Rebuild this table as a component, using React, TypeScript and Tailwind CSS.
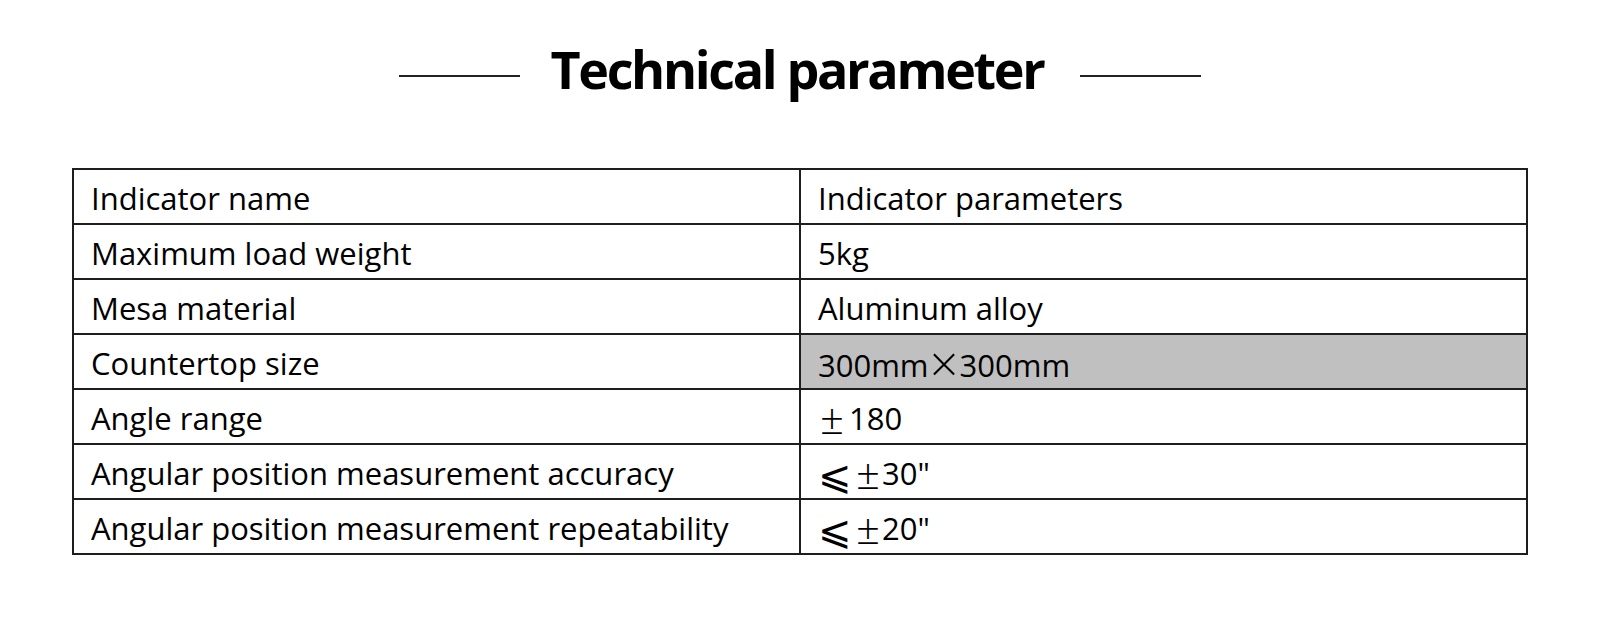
import React from "react";

// wide, thin symbols like the CJK ones in the original sheet
const Sym = ({ c, cls }: { c: string; cls: string }) => (
  <span className={`inline-block text-center leading-none ${cls}`}>{c}</span>
);

const Times = () => <Sym c={"\u00d7"} cls="w-[31px] text-[50px] font-extralight align-[-5px]" />;
const PlusMinus = () => <Sym c={"\u00b1"} cls="w-[28px] text-[42px] font-light align-[-4px]" />;
const Leq = () => <Sym c={"\u2a7d"} cls="w-[33px] text-[40px] font-extralight align-[-4px]" />;

const rows: { name: string; value: React.ReactNode; shaded?: boolean }[] = [
  { name: "Indicator name", value: "Indicator parameters" },
  { name: "Maximum load weight", value: "5kg" },
  { name: "Mesa material", value: "Aluminum alloy" },
  {
    name: "Countertop size",
    value: (
      <>
        300mm<Times />300mm
      </>
    ),
    shaded: true,
  },
  {
    name: "Angle range",
    value: (
      <>
        <PlusMinus />
        <span className="ml-[3px]">180</span>
      </>
    ),
  },
  {
    name: "Angular position measurement accuracy",
    value: (
      <>
        <Leq />
        <span className="ml-[3px]" />
        <PlusMinus />30"
      </>
    ),
  },
  {
    name: "Angular position measurement repeatability",
    value: (
      <>
        <Leq />
        <span className="ml-[3px]" />
        <PlusMinus />20"
      </>
    ),
  },
];

const App = () => {
  return (
    <div className="min-h-[635px] w-[1600px] bg-white font-['Open_Sans','Noto_Sans_CJK_SC','DejaVu_Sans',sans-serif] text-black">
      {/* Title */}
      <div className="flex items-start justify-center pt-[39px]">
        <div className="mt-[36px] h-[2px] w-[121px] bg-[#222]" />
        <h1 className="ml-[31px] mr-[37px] text-[52px] font-bold leading-[60px] tracking-[-0.045em]">
          Technical parameter
        </h1>
        <div className="mt-[36px] h-[2px] w-[121px] bg-[#222]" />
      </div>

      {/* Table */}
      <div className="flex justify-center pt-[69px]">
        <table className="w-[1456px] table-fixed border-collapse border-2 border-[#1e1e1e]">
          <tbody>
            {rows.map((row, i) => (
              <tr key={i}>
                <td className="h-[55px] border-2 border-[#1e1e1e] px-[17px] pt-[3px] text-[31px] font-medium leading-none">
                  {row.name}
                </td>
                <td
                  className={`h-[55px] whitespace-nowrap border-2 border-[#1e1e1e] px-[17px] pt-[3px] text-[31px] font-medium leading-none ${
                    row.shaded ? "bg-[#c0c0c0]" : ""
                  }`}
                >
                  {row.value}
                </td>
              </tr>
            ))}
          </tbody>
        </table>
      </div>
    </div>
  );
};

export default App;
